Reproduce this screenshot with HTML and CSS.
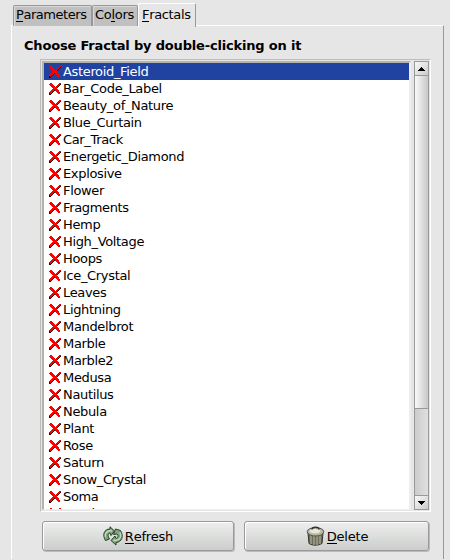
FILE: index.html
```html
<!DOCTYPE html>
<html lang="en">
<head>
<meta charset="utf-8">
<title>Fractals</title>
<link rel="stylesheet" href="styles.css">
</head>
<body>
<svg class="defs" width="0" height="0" aria-hidden="true">
  <symbol id="cross" viewBox="0 0 12 12">
    <g shape-rendering="crispEdges"><path fill="#200" d="M0 1h3v1h1v1h1v1h1v1h1V4h1V3h1V2h1V1h2v1h-1v1h-1v1H9v1H8v2h1v1h1v1h1v2h-2v-1H8V9H7V8H5v1H4v1H3v1H2v1H0v-2h1V9h1V8h1V7h1V5H3V4H2V3H1V2H0z"/>
    <path fill="#f00" d="M1 0h2v1h1v1h1v1h1v1h1V3h1V2h1V1h1V0h2v1h-1v1h-1v1H9v1H8v2h1v1h1v2h1v2H9v-1H8V9H7V8H6V7H5v1H4v1H3v1H2v1H1v-1H0V9h1V8h1V7h1V6h1V5H3V4H2V3H1V2H0V1h1z"/></g>
  </symbol>
</svg>
<nav class="tabs">
  <div class="tab first"><span><u>P</u>arameters</span></div>
  <div class="tab second"><span>Co<u>l</u>ors</span></div>
  <div class="tab active"><span><u>F</u>ractals</span></div>
</nav>
<main class="panel">
  <h1>Choose Fractal by double-clicking on it</h1>
  <div class="frame">
    <ul class="list" id="list"></ul>
    <div class="scrollbar">
      <div class="arrow"><svg width="7" height="4" shape-rendering="crispEdges"><path d="M3 0h1v1h1v1h1v1h1v1H0V3h1V2h1V1h1z"/></svg></div>
      <div class="thumb"></div>
      <div class="trough"></div>
      <div class="arrow down"><svg width="7" height="4" shape-rendering="crispEdges"><path d="M0 0h7v1H6v1H5v1H4v1H3V3H2V2H1V1H0z"/></svg></div>
    </div>
  </div>
  <div class="buttons">
    <button class="refresh"><svg width="20" height="20" viewBox="0 0 20 20"><g stroke="#2b3a2b" stroke-width="1" stroke-linejoin="round"><path fill="#7fa97c" d="M2.5 14.5C-1 9 1 3 7 3L7 .8 11.5 5 8 9.5 7 7C4.5 7.5 4.5 10 6.5 13z"/><path fill="#7fa97c" d="M17.5 4.5C21 10 19 16 13 16.5L13 19 8 14.5 12 10 13 12.5C15.5 12 15.5 9 14 8L10.5 8.5 12.5 3z"/></g><path d="M2.5 11C1.5 6 5 4.5 9 4.8M17 6.5C19 11 17 14.5 10.5 14.5" stroke="#c0dfbb" stroke-width="1.3" fill="none"/></svg><span><u>R</u>efresh</span></button>
    <button class="delete"><svg width="20" height="20" viewBox="0 0 20 20"><path d="M3 7 4 17.5Q10 21 17 17.5L18 7z" fill="#6c6b5c" stroke="#35342a"/><path d="M6 9v9M9 10v9M12 10v9M15 9v9" stroke="#aaa993" stroke-width="1.3"/><ellipse cx="10.5" cy="5.8" rx="8.3" ry="4.2" fill="#b9b7a2" stroke="#55544a"/><ellipse cx="10" cy="5" rx="5.5" ry="2.3" fill="#e8e6d5"/><path d="M7 3.5Q7 1.3 10.5 1.3T14 3.5" fill="none" stroke="#333" stroke-width="1.5"/></svg><span><u>D</u>elete</span></button>
  </div>
</main>
<script src="list.js"></script>
</body>
</html>
```
FILE: styles.css
```css
* { box-sizing: border-box; }
body { margin: 0; width: 450px; height: 560px; overflow: hidden; background: #e6e6e6; font: 13px "DejaVu Sans", sans-serif; color: #000; }
.defs { position: absolute; }
u { text-decoration: none; border-bottom: 1px solid #000; display: inline-block; line-height: 13px; }
.tabs { display: flex; align-items: flex-end; height: 26px; padding-left: 13px; }
.tab { height: 21px; background: #c0c0c0; border: 1px solid #989898; border-bottom: 0; border-radius: 2px 2px 0 0; box-shadow: inset 1px 1px #dadada; line-height: 17px; padding-left: 2px; white-space: nowrap; letter-spacing: -.45px; }
.first { width: 79px; }
.second { width: 46px; letter-spacing: -.3px; }
.active { width: 58px; height: 24px; background: #e6e6e6; border-color: #fff #999 #fff #fff; padding-left: 3px; line-height: 21px; box-shadow: none; position: relative; margin-bottom: -1px; border-bottom: 0; letter-spacing: -.35px; }
.panel { margin-left: 11px; width: 433px; height: 534px; border: 1px solid #fff; border-right-color: #999; border-bottom: 0; margin-top: -1px; }
h1 { margin: 12px 0 0 12px; font-size: 13px; line-height: 16px; font-weight: bold; letter-spacing: -.18px; }
.frame { margin: 5px 0 0 28px; width: 391px; height: 453px; border: 1px solid #bcbcbc; border-right-color: #fff; border-bottom-color: #fff; padding: 1px; display: flex; }
.list { margin: 0; padding: 0; list-style: none; width: 369px; height: 449px; overflow: hidden; background: #fff; border: 2px solid #b4b4ac; border-right-color: #eee; border-bottom: 1px solid #eee; letter-spacing: -.34px; }
.list li { height: 17px; line-height: 17px; display: flex; padding-left: 5px; gap: 2px; align-items: center; white-space: pre; }
.list li.selected { background: #2042a0; color: #fff; }
.scrollbar { margin-left: 3px; width: 15px; height: 449px; border: 1px solid #999; display: flex; flex-direction: column; background: linear-gradient(90deg,#ccc,#e0e0e0); }
.arrow { height: 14px; border-bottom: 1px solid #999; display: flex; align-items: center; justify-content: center; background: linear-gradient(135deg,#f8f8f8,#ccc); }
.thumb { height: 333px; border-bottom: 1px solid #999; background: linear-gradient(90deg,#fafafa,#c8c8c8); }
.trough { flex: 1; }
.arrow.down { border: 0; border-top: 1px solid #999; }
.buttons { display: flex; gap: 10px; padding: 9px 0 0 30px; }
button { height: 30px; border: 1px solid #999; border-radius: 3px; box-shadow: inset 1px 1px #fff, 1px 1px #bbb; background: linear-gradient(#eee,#cbcecb); display: flex; align-items: center; justify-content: center; gap: 2px; padding: 0; font: inherit; letter-spacing: -.2px; color: #000; }
.refresh { width: 192px; }
.delete { width: 185px; }
```
FILE: list.js
```js
const names = ["Asteroid_Field","Bar_Code_Label","Beauty_of_Nature","Blue_Curtain","Car_Track","Energetic_Diamond","Explosive","Flower","Fragments","Hemp","High_Voltage","Hoops","Ice_Crystal","Leaves","Lightning","Mandelbrot","Marble","Marble2","Medusa","Nautilus","Nebula","Plant","Rose","Saturn","Snow_Crystal","Soma","Spark"];
document.getElementById("list").innerHTML = names.map((n, i) =>
  `<li${i ? "" : ' class="selected"'}><svg width="12" height="12"><use href="#cross"/></svg><span>${n}</span></li>`).join("");
```
